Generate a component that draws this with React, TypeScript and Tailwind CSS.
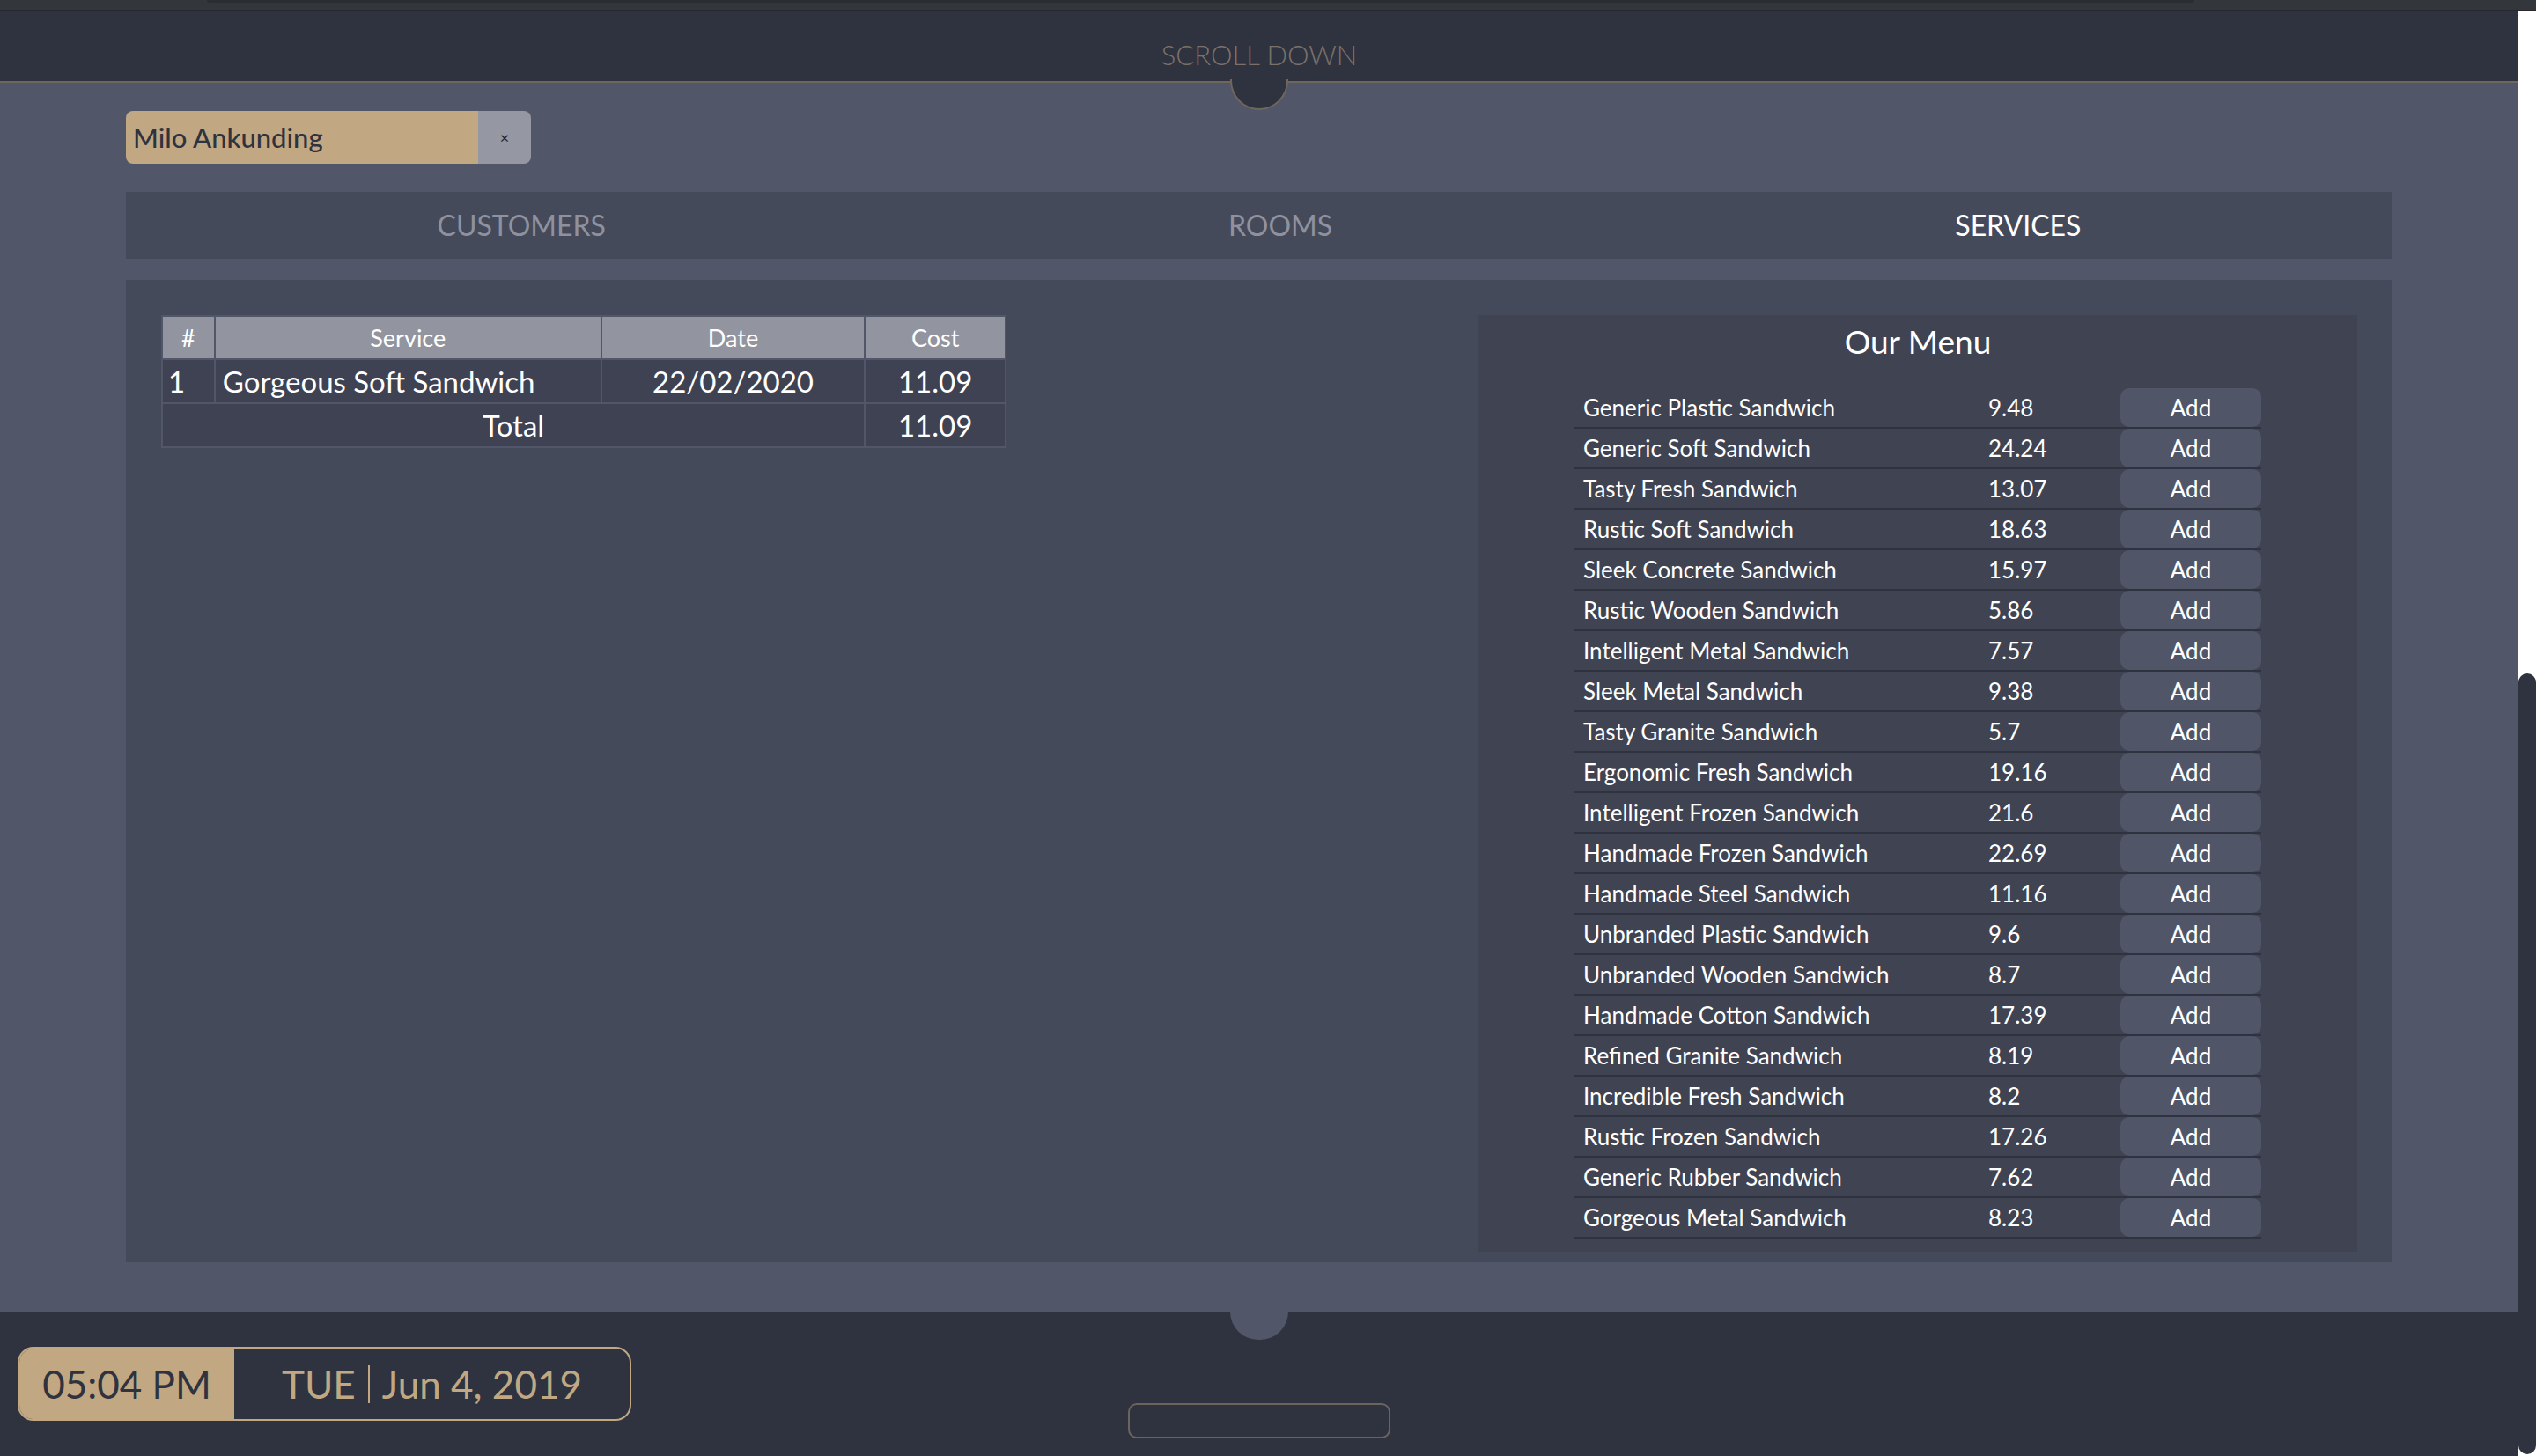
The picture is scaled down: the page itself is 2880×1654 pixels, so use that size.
import React from 'react';

const MENU: [string, string][] = [
  ['Generic Plastic Sandwich', '9.48'],
  ['Generic Soft Sandwich', '24.24'],
  ['Tasty Fresh Sandwich', '13.07'],
  ['Rustic Soft Sandwich', '18.63'],
  ['Sleek Concrete Sandwich', '15.97'],
  ['Rustic Wooden Sandwich', '5.86'],
  ['Intelligent Metal Sandwich', '7.57'],
  ['Sleek Metal Sandwich', '9.38'],
  ['Tasty Granite Sandwich', '5.7'],
  ['Ergonomic Fresh Sandwich', '19.16'],
  ['Intelligent Frozen Sandwich', '21.6'],
  ['Handmade Frozen Sandwich', '22.69'],
  ['Handmade Steel Sandwich', '11.16'],
  ['Unbranded Plastic Sandwich', '9.6'],
  ['Unbranded Wooden Sandwich', '8.7'],
  ['Handmade Cotton Sandwich', '17.39'],
  ['Refined Granite Sandwich', '8.19'],
  ['Incredible Fresh Sandwich', '8.2'],
  ['Rustic Frozen Sandwich', '17.26'],
  ['Generic Rubber Sandwich', '7.62'],
  ['Gorgeous Metal Sandwich', '8.23'],
];

// ─── Selected customer chip ───────────────────────────────────────────────────

function CustomerChip() {
  return (
    <div className="flex h-[60px] w-[460px] rounded-[8px] overflow-hidden">
      <div className="w-[400px] bg-[#c1a883] flex items-center pl-[8px] text-[31px] font-medium text-[#2f3340] leading-none">
        Milo Ankunding
      </div>
      <button className="flex-1 bg-[#9598a3] flex items-center justify-center text-[18px] text-[#1f2026] leading-none">×</button>
    </div>
  );
}

// ─── Tabs ─────────────────────────────────────────────────────────────────────

function Tabs() {
  return (
    <div className="mt-[32px] h-[76px] bg-[#454a5b] flex items-center justify-around text-[32px] leading-none">
      <span className="text-[#8f929e]">CUSTOMERS</span>
      <span className="text-[#8f929e]">ROOMS</span>
      <span className="text-white">SERVICES</span>
    </div>
  );
}

// ─── Ordered services table ───────────────────────────────────────────────────

function OrdersTable() {
  const th = 'border-2 border-[#515669] h-[49px] font-normal text-[27px] text-white text-center';
  const td = 'border-2 border-[#515669] h-[50px] text-[33px] text-white';
  return (
    <table className="border-collapse w-[960px] bg-[#3f4252] leading-none">
      <thead>
        <tr className="bg-[#92959f]">
          <th className={`${th} w-[60px]`}>#</th>
          <th className={`${th} w-[440px]`}>Service</th>
          <th className={`${th} w-[300px]`}>Date</th>
          <th className={`${th} w-[160px]`}>Cost</th>
        </tr>
      </thead>
      <tbody>
        <tr>
          <td className={`${td} pl-[6px]`}>1</td>
          <td className={`${td} pl-[8px]`}>Gorgeous Soft Sandwich</td>
          <td className={`${td} text-center`}>22/02/2020</td>
          <td className={`${td} text-center`}>11.09</td>
        </tr>
        <tr>
          <td colSpan={3} className={`${td} text-center`}>Total</td>
          <td className={`${td} text-center`}>11.09</td>
        </tr>
      </tbody>
    </table>
  );
}

// ─── Menu ─────────────────────────────────────────────────────────────────────

function Menu() {
  return (
    <div className="w-[998px] bg-[#404352] pt-[11px] pb-[15px] flex flex-col">
      <h2 className="text-center text-[37px] leading-none h-[37px] text-white">Our Menu</h2>
      <div className="mt-[35px] w-[780px] mx-auto flex flex-col">
        {MENU.map(([name, price]) => (
          <div key={name} className="h-[46px] border-b-2 border-[#2f3340] flex items-center text-[26px] text-white leading-none">
            <span className="w-[470px] pl-[10px]">{name}</span>
            <span className="w-[150px]">{price}</span>
            <button className="w-[160px] h-full rounded-[10px] bg-[#515568] text-white text-[26px]">Add</button>
          </div>
        ))}
      </div>
    </div>
  );
}

// ─── Main ─────────────────────────────────────────────────────────────────────

export default function App() {
  return (
    <div className="w-[2880px] h-[1654px] flex flex-col bg-white overflow-hidden" style={{ fontFamily: 'Lato, "Noto Sans", sans-serif' }}>
      {/* browser strip */}
      <div className="h-[12px] bg-[#33373b] border-b border-[#26282c] shrink-0">
        <div className="ml-[235px] w-[2257px] h-[3px] bg-[#2a2d31] rounded-b-[3px]" />
      </div>

      <div className="flex flex-1 min-h-0">
        <div className="flex-1 flex flex-col">
          {/* Header */}
          <header className="relative h-[82px] bg-[#2f3340] border-b-2 border-[#6f665c] flex justify-center shrink-0">
            <span className="pt-[35px] text-[31px] font-light leading-none text-[#7b7168]">SCROLL DOWN</span>
            <div className="absolute left-1/2 -translate-x-1/2 top-[78px] w-[66px] h-[35px] rounded-b-full bg-[#2f3340] border-2 border-t-0 border-[#6f665c]" />
          </header>

          {/* Body */}
          <main className="flex-1 bg-[#515669] px-[143px] pt-[32px] pb-[56px] flex flex-col">
            <CustomerChip />
            <Tabs />
            <div className="mt-[24px] flex-1 bg-[#454a5b] p-[40px] pb-[12px] flex">
              <div className="w-[1496px]">
                <OrdersTable />
              </div>
              <Menu />
            </div>
          </main>

          {/* Footer */}
          <footer className="relative h-[164px] bg-[#2f3340] shrink-0 px-[20px] pt-[40px]">
            <div className="absolute left-1/2 -translate-x-1/2 top-0 w-[66px] h-[32px] rounded-b-full bg-[#515669]" />
            <div className="inline-flex h-[84px] border-2 border-[#c1a883] rounded-[18px] overflow-hidden leading-none">
              <div className="w-[244px] bg-[#c1a883] flex items-center justify-center text-[44px] text-[#2f3340]">05:04 PM</div>
              <div className="flex items-center pl-[54px] pr-[54px] text-[44px] text-[#c1a883]">
                <span>TUE</span>
                <span className="mx-[14px] h-[43px] border-l-2 border-[#c1a883]" />
                <span>Jun 4, 2019</span>
              </div>
            </div>
            <div className="absolute left-1/2 -translate-x-1/2 bottom-[20px] w-[298px] h-[40px] rounded-[10px] border-2 border-[#6b645c]" />
          </footer>
        </div>

        {/* scrollbar */}
        <div className="w-[20px] bg-white flex flex-col justify-end shrink-0">
          <div className="h-[887px] mb-[2px] rounded-full bg-[#2f3340]" />
        </div>
      </div>
    </div>
  );
}
